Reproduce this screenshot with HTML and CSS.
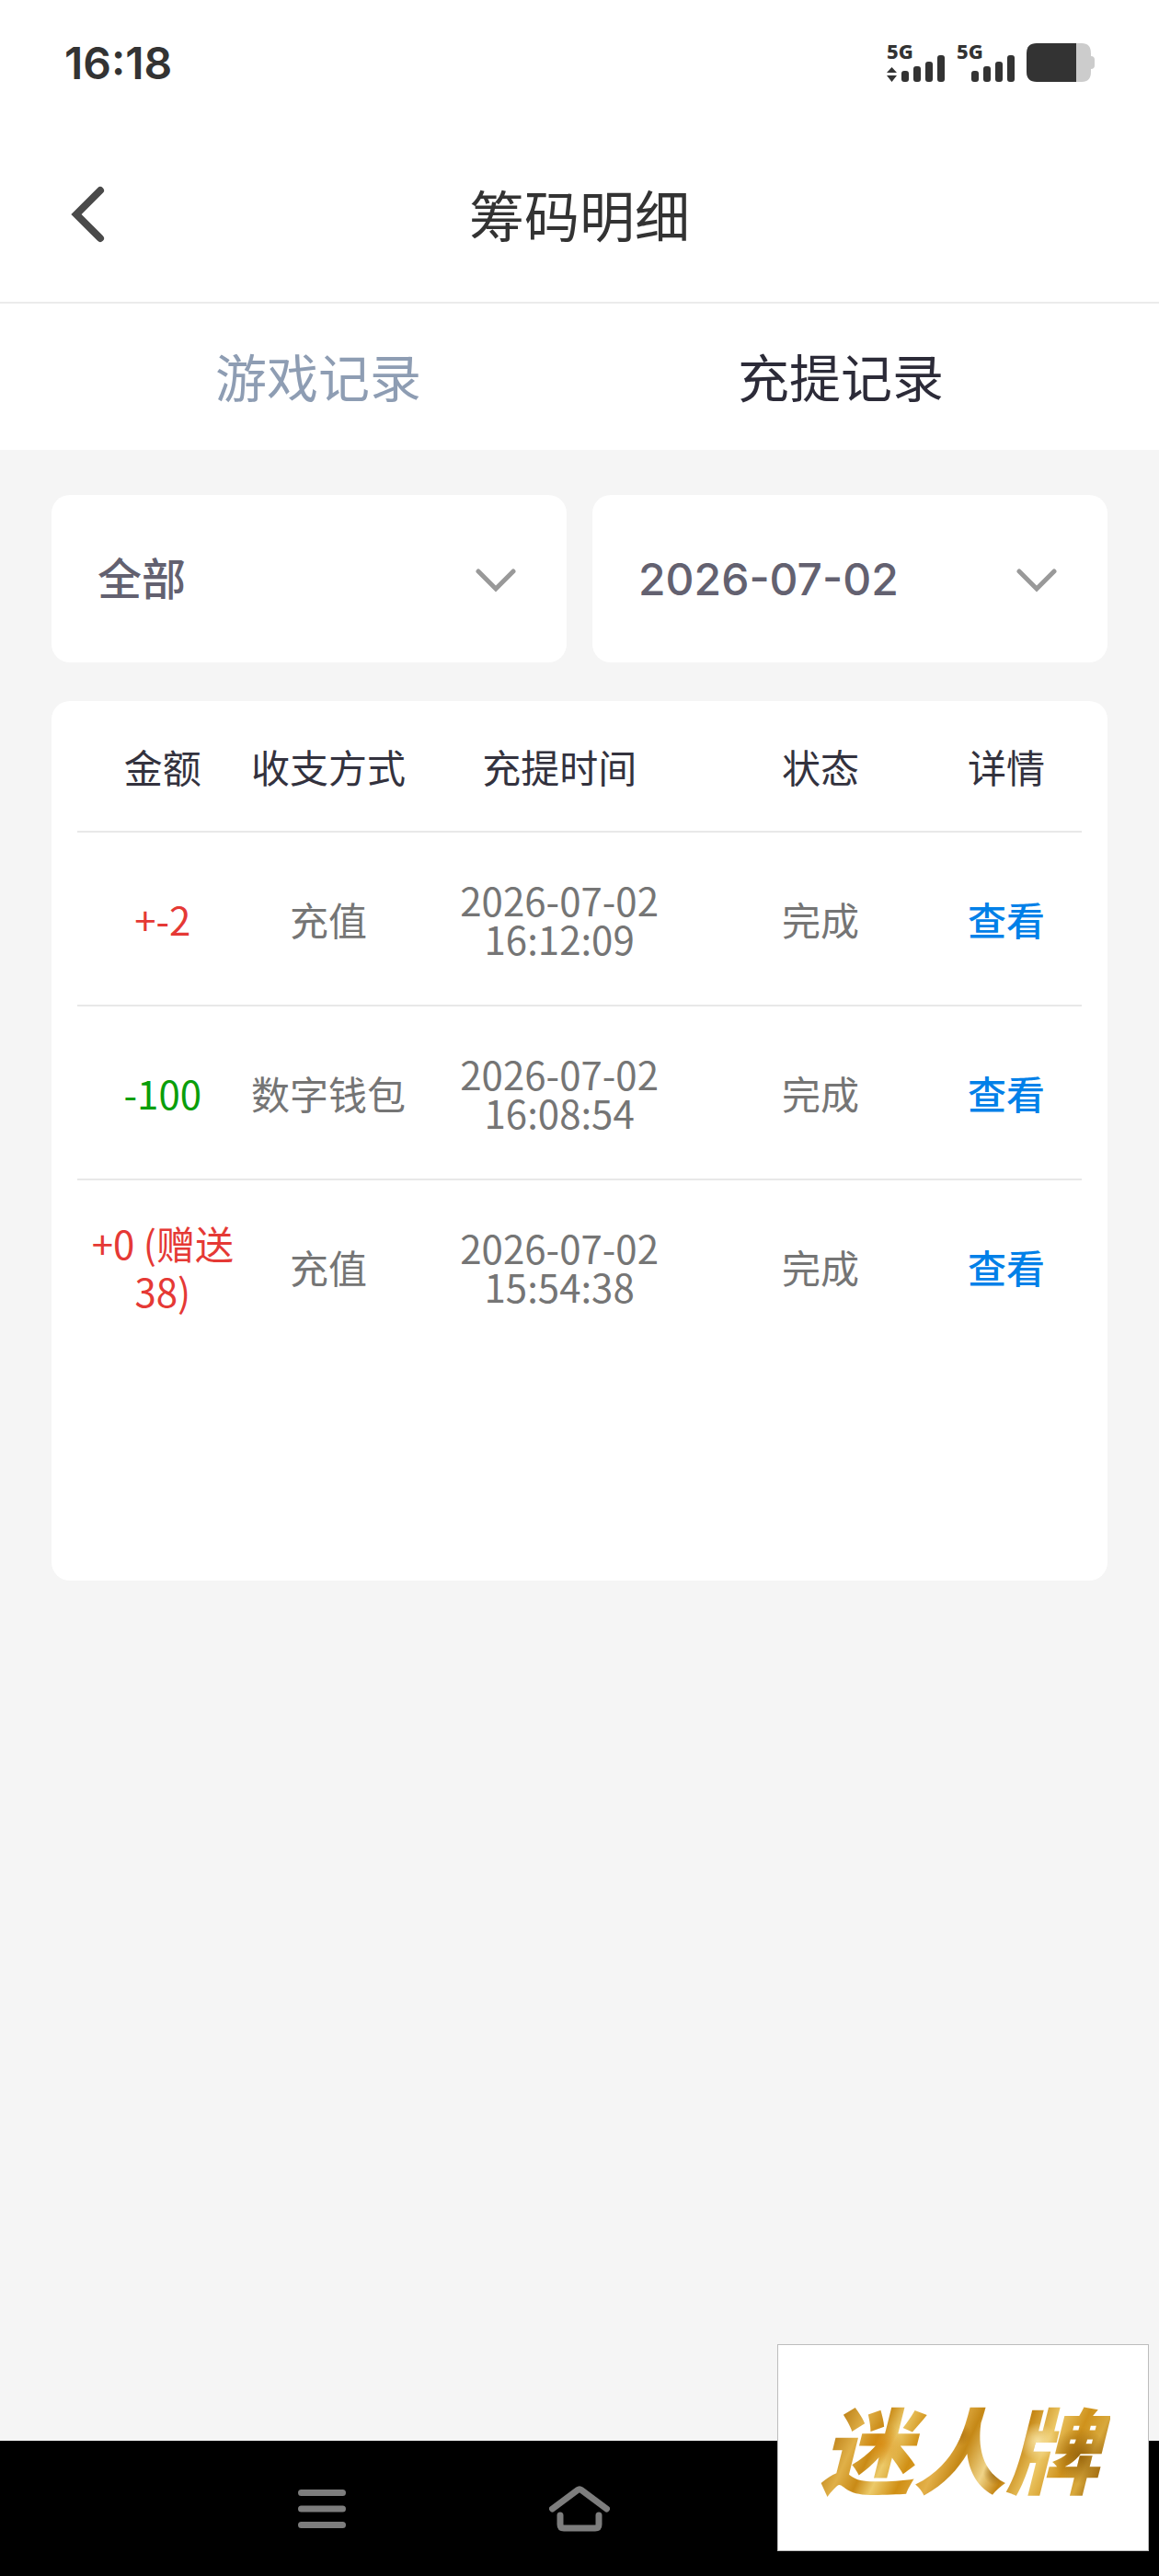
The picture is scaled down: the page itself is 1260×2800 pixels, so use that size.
FILE: index.html
```html
<!DOCTYPE html>
<html lang="zh-CN">
  <head>
    <meta charset="UTF-8" />
    <meta name="viewport" content="width=device-width, initial-scale=1.0" />
    <title>筹码明细</title>
    <link rel="stylesheet" href="styles.css">
  </head>
  <body>
    <div class="status-bar">
      <span class="status-time">16:18</span>
      <div class="status-icons">
        <svg class="signal" width="64" height="48" viewBox="0 -6 64 48">
          <text class="signal-text" x="0" y="17">5G</text>
          <path d="M0 32l5.500-6 5.500 6zM0 35h11l-5.500 7z" />
          <rect x="16" y="30" width="8" height="12" rx="3" />
          <rect x="29" y="25" width="8" height="17" rx="3" />
          <rect x="42" y="20" width="8" height="22" rx="3" />
          <rect x="55" y="13" width="8" height="29" rx="3" />
        </svg>
        <svg class="signal" width="64" height="48" viewBox="0 -6 64 48">
          <text class="signal-text" x="0" y="17">5G</text>
          <rect x="16" y="30" width="8" height="12" rx="3" />
          <rect x="29" y="25" width="8" height="17" rx="3" />
          <rect x="42" y="20" width="8" height="22" rx="3" />
          <rect x="55" y="13" width="8" height="29" rx="3" />
        </svg>
        <svg class="battery" width="74" height="48" viewBox="0 -6 74 48">
          <path fill="#cccccc" d="M54 0h6q10 0 10 11v3q4 0 4 4v6q0 4-4 4v3q0 11-10 11h-6z" />
          <path fill="#333333" d="M11 0h43v42H11Q0 42 0 31V11Q0 0 11 0z" />
        </svg>
      </div>
    </div>

    <header class="header">
      <button type="button" class="btn-back" aria-label="返回">
        <svg width="40" height="64" viewBox="0 0 40 64">
          <path d="M33 7L7 33l26 26" />
        </svg>
      </button>
      <h1 class="title">筹码明细</h1>
    </header>

    <nav class="tabs">
      <button type="button" class="tab">游戏记录</button>
      <button type="button" class="tab active">充提记录</button>
    </nav>

    <main class="content">
      <div class="filters">
        <div class="filter">
          <select class="filter-select" aria-label="类型">
            <option>全部</option>
          </select>
          <svg class="filter-arrow" width="44" height="26" viewBox="0 0 44 26">
            <path d="M3 3l19 19L41 3" />
          </svg>
        </div>
        <div class="filter">
          <select class="filter-select" aria-label="日期">
            <option>2026-07-02</option>
          </select>
          <svg class="filter-arrow" width="44" height="26" viewBox="0 0 44 26">
            <path d="M3 3l19 19L41 3" />
          </svg>
        </div>
      </div>

      <div class="record-card">
        <table class="record-table">
          <thead>
            <tr>
              <th class="col-amount">金额</th>
              <th class="col-type">收支方式</th>
              <th class="col-time">充提时间</th>
              <th class="col-status">状态</th>
              <th class="col-detail">详情</th>
            </tr>
          </thead>
          <tbody>
            <tr>
              <td class="plus">+-2</td>
              <td>充值</td>
              <td class="time">2026-07-02<br />16:12:09</td>
              <td>完成</td>
              <td><a href="#" class="link">查看</a></td>
            </tr>
            <tr>
              <td class="minus">-100</td>
              <td>数字钱包</td>
              <td class="time">2026-07-02<br />16:08:54</td>
              <td>完成</td>
              <td><a href="#" class="link">查看</a></td>
            </tr>
            <tr>
              <td class="plus">+0 (赠送 38)</td>
              <td>充值</td>
              <td class="time">2026-07-02<br />15:54:38</td>
              <td>完成</td>
              <td><a href="#" class="link">查看</a></td>
            </tr>
          </tbody>
        </table>
      </div>
    </main>

    <footer class="nav-bar">
      <button type="button" class="nav-btn" aria-label="菜单">
        <svg width="52" height="50" viewBox="0 0 52 50">
          <path d="M3.500 7.500h45M3.500 25h45M3.500 42.500h45" />
        </svg>
      </button>
      <button type="button" class="nav-btn" aria-label="主页">
        <svg width="66" height="50" viewBox="0 0 66 50">
          <path d="M3.500 25L31 4.500q2-1.500 4 0L62.500 25M12 32v10q0 4 4 4h34q4 0 4-4V32" />
        </svg>
      </button>
    </footer>

    <div class="badge"><span class="badge-text">迷人牌</span></div>
  </body>
</html>
```
FILE: styles.css
```css
* {
  box-sizing: border-box;
}
body {
  display: flex;
  flex-direction: column;
  min-height: 100vh;
  margin: 0;
  background: #f5f5f5;
  color: #333333;
  font-family: "Noto Sans CJK SC", sans-serif;
}
button {
  padding: 0;
  border: none;
  background: none;
  font-family: inherit;
}
svg {
  display: block;
}

/* status bar */
.status-bar {
  display: flex;
  justify-content: space-between;
  align-items: center;
  height: 136px;
  padding: 0 70px;
  background: #fff;
}
.status-time {
  font-family: Inter, sans-serif;
  font-size: 48px;
  font-weight: 600;
}
.status-icons {
  display: flex;
  gap: 12px;
  padding-bottom: 6px;
}
.signal {
  fill: #333333;
}
.signal-text {
  font-family: "Noto Sans", sans-serif;
  font-size: 22px;
  font-weight: 800;
}

/* header */
.header {
  display: grid;
  grid-template-columns: 80px 1fr 80px;
  align-items: center;
  height: 194px;
  padding: 0 76px;
  border-bottom: 2px solid #ebebeb;
  background: #fff;
}
.btn-back svg {
  fill: none;
  stroke: #4a4a4a;
  stroke-width: 8;
  stroke-linecap: round;
}
.title {
  margin: 0;
  font-size: 60px;
  font-weight: 400;
  line-height: 80px;
  text-align: center;
}

.tabs {
  display: grid;
  grid-template-columns: 1fr 1fr;
  height: 159px;
  padding: 0 62px 4px;
  background: #fff;
}
.tab {
  color: #8e9db3;
  font-size: 56px;
}
.tab.active {
  color: #2c2b38;
}

/* content */
.content {
  flex: 1;
  padding: 49px 56px;
}
.filters {
  display: grid;
  grid-template-columns: 1fr 1fr;
  gap: 28px;
  margin-bottom: 42px;
}
.filter {
  position: relative;
  height: 182px;
}
.filter-select {
  width: 100%;
  height: 100%;
  padding: 0 50px;
  border: none;
  border-radius: 20px;
  background: #fff;
  color: #636170;
  font-family: Inter, "Noto Sans CJK SC", sans-serif;
  font-size: 48px;
  font-weight: 500;
  appearance: none;
}
.filter-arrow {
  position: absolute;
  top: 80px;
  right: 55px;
  fill: none;
  stroke: #999999;
  stroke-width: 5;
  stroke-linecap: round;
  pointer-events: none;
}

.record-card {
  min-height: 956px;
  padding: 0 28px;
  border-radius: 20px;
  background: #fff;
}
.record-table {
  width: 100%;
  border-collapse: collapse;
  table-layout: fixed;
  font-size: 42px;
  line-height: 52px;
  text-align: center;
}
.record-table th {
  height: 142px;
  padding: 0;
  color: #33323e;
  font-weight: 400;
}
.record-table td {
  height: 189px;
  padding: 0;
  border-top: 2px solid #e8e8e8;
  color: #757575;
}
.col-amount {
  width: 17%;
}
.col-type {
  width: 16%;
}
.col-time {
  width: 30%;
}
.col-status {
  width: 22%;
}
.col-detail {
  width: 15%;
}
.record-table .time {
  line-height: 42px;
}
.record-table .plus {
  color: #e53935;
}
.record-table .minus {
  color: #0a9e0a;
}
.link {
  color: #0080e8;
  font-weight: 500;
  text-decoration: none;
}

/* bottom nav */
.nav-bar {
  display: grid;
  grid-template-columns: repeat(3, 1fr);
  height: 147px;
  padding: 0 210px;
  background: #000;
}
.nav-btn {
  display: flex;
  justify-content: center;
  align-items: center;
}
.nav-btn svg {
  fill: none;
  stroke: #7d7d7d;
  stroke-width: 7;
  stroke-linecap: round;
}

.badge {
  position: fixed;
  right: 11px;
  bottom: 27px;
  display: flex;
  justify-content: center;
  align-items: center;
  width: 404px;
  height: 225px;
  padding: 0 8px 4px 0;
  border: 1px solid #bdbdbd;
  background: #fff;
}
.badge-text {
  padding: 0 12px;
  background:
    radial-gradient(circle at 24% 48%, #d98a10cc 0, #d98a1000 9%),
    radial-gradient(circle at 50% 40%, #a86a08cc 0, #a86a0800 7%),
    radial-gradient(circle at 62% 72%, #8f5c06cc 0, #8f5c0600 6%),
    radial-gradient(circle at 90% 58%, #8a5806cc 0, #8a580600 10%),
    radial-gradient(circle at 76% 46%, #f7e2a0 0, #f7e2a000 8%),
    linear-gradient(
      115deg,
      #a8700c 0%,
      #b87a10 12%,
      #e0b048 20%,
      #c98a16 26%,
      #ecca6a 31%,
      #d08f14 38%,
      #e3b04a 46%,
      #c58816 52%,
      #f0d488 60%,
      #c48412 66%,
      #ecc765 74%,
      #cf921c 82%,
      #d8a83c 88%,
      #9a6208 94%,
      #c98a16 100%
    );
  background-clip: text;
  -webkit-background-clip: text;
  color: transparent;
  font-size: 101px;
  font-style: italic;
  font-weight: 900;
  line-height: 130px;
}
```
